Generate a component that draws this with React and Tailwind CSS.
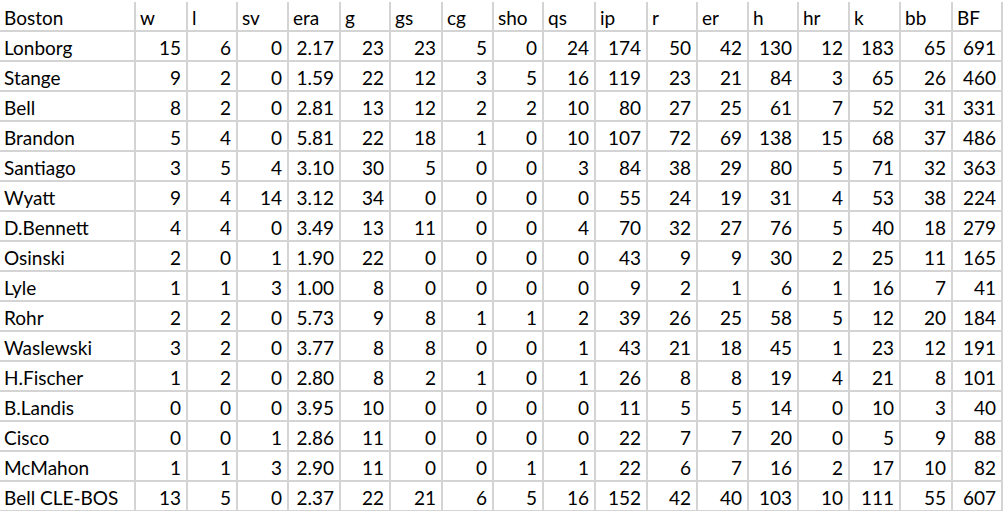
const header = ["Boston", "w", "l", "sv", "era", "g", "gs", "cg", "sho", "qs", "ip", "r", "er", "h", "hr", "k", "bb", "BF"];

const rows = [
  ["Lonborg", 15, 6, 0, "2.17", 23, 23, 5, 0, 24, 174, 50, 42, 130, 12, 183, 65, 691],
  ["Stange", 9, 2, 0, "1.59", 22, 12, 3, 5, 16, 119, 23, 21, 84, 3, 65, 26, 460],
  ["Bell", 8, 2, 0, "2.81", 13, 12, 2, 2, 10, 80, 27, 25, 61, 7, 52, 31, 331],
  ["Brandon", 5, 4, 0, "5.81", 22, 18, 1, 0, 10, 107, 72, 69, 138, 15, 68, 37, 486],
  ["Santiago", 3, 5, 4, "3.10", 30, 5, 0, 0, 3, 84, 38, 29, 80, 5, 71, 32, 363],
  ["Wyatt", 9, 4, 14, "3.12", 34, 0, 0, 0, 0, 55, 24, 19, 31, 4, 53, 38, 224],
  ["D.Bennett", 4, 4, 0, "3.49", 13, 11, 0, 0, 4, 70, 32, 27, 76, 5, 40, 18, 279],
  ["Osinski", 2, 0, 1, "1.90", 22, 0, 0, 0, 0, 43, 9, 9, 30, 2, 25, 11, 165],
  ["Lyle", 1, 1, 3, "1.00", 8, 0, 0, 0, 0, 9, 2, 1, 6, 1, 16, 7, 41],
  ["Rohr", 2, 2, 0, "5.73", 9, 8, 1, 1, 2, 39, 26, 25, 58, 5, 12, 20, 184],
  ["Waslewski", 3, 2, 0, "3.77", 8, 8, 0, 0, 1, 43, 21, 18, 45, 1, 23, 12, 191],
  ["H.Fischer", 1, 2, 0, "2.80", 8, 2, 1, 0, 1, 26, 8, 8, 19, 4, 21, 8, 101],
  ["B.Landis", 0, 0, 0, "3.95", 10, 0, 0, 0, 0, 11, 5, 5, 14, 0, 10, 3, 40],
  ["Cisco", 0, 0, 1, "2.86", 11, 0, 0, 0, 0, 22, 7, 7, 20, 0, 5, 9, 88],
  ["McMahon", 1, 1, 3, "2.90", 11, 0, 0, 1, 1, 22, 6, 7, 16, 2, 17, 10, 82],
  ["Bell CLE-BOS", 13, 5, 0, "2.37", 22, 21, 6, 5, 16, 152, 42, 40, 103, 10, 111, 55, 607],
];

export default function App() {
  return (
    <div className="w-[1004px] h-[511px] overflow-hidden bg-white pt-[2px] font-['Lato',sans-serif] text-[19px] text-black">
      <div className="grid grid-cols-[136px_52px_50px_51px_52px_50px_52px_51px_50px_52px_52px_50px_51px_50px_51px_51px_52px_50px]">
        {header.map((h, i) => (
          <div
            key={"h" + i}
            className="h-[30px] border-r-2 border-b-2 border-[#d4d4d4] flex items-end pl-1 pb-[3px] leading-none"
          >
            {h}
          </div>
        ))}
        {rows.map((r, ri) =>
          r.map((v, ci) => (
            <div
              key={ri + "-" + ci}
              className={`h-[30px] border-r-2 border-b-2 border-[#d4d4d4] flex items-end pb-[3px] leading-none ${
                ci === 0 ? "pl-1" : "justify-end pr-[5px]"
              }`}
            >
              {v}
            </div>
          ))
        )}
      </div>
    </div>
  );
}
